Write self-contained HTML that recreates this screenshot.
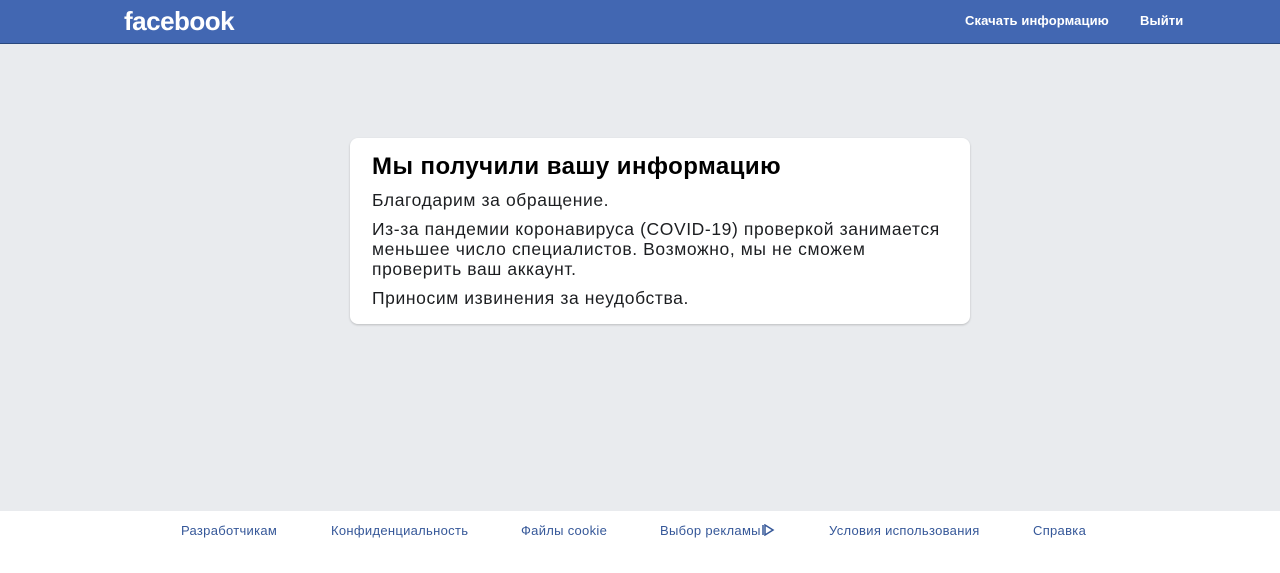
<!DOCTYPE html>
<html><head><meta charset="utf-8"><style>
body{margin:0;width:1280px;height:573px;background:#e9ebee;font-family:"Liberation Sans",sans-serif;position:relative;overflow:hidden}
.top{position:absolute;left:0;top:0;width:1280px;height:44px;background:#4267b2;border-bottom:1px solid #29487d;box-sizing:border-box}
.logo{position:absolute;left:124px;top:6px;color:#fff;font-weight:bold;font-size:26px;letter-spacing:-0.5px}
.tl{position:absolute;top:13px;color:#fff;font-weight:bold;font-size:13px;letter-spacing:0.1px}
.card{position:absolute;left:350px;top:138px;width:620px;height:186px;background:#fff;border-radius:8px;box-shadow:0 1px 2px rgba(0,0,0,.2)}
h1{position:absolute;left:22px;top:15px;margin:0;font-size:24px;font-weight:bold;color:#000;letter-spacing:0.45px}
p{position:absolute;left:22px;margin:0;font-size:17.5px;line-height:20px;color:#1c1e21;width:590px;letter-spacing:0.6px}
.foot{position:absolute;left:0;top:511px;width:1280px;height:62px;background:#fff}
.fl{position:absolute;top:12px;color:#365899;font-size:13px;letter-spacing:0.3px}
</style></head><body>
<div class="top"><div class="logo">facebook</div>
<div class="tl" style="left:965px">Скачать информацию</div>
<div class="tl" style="left:1140px">Выйти</div></div>
<div class="card">
<h1>Мы получили вашу информацию</h1>
<p style="top:52px">Благодарим за обращение.</p>
<p style="top:81px">Из-за пандемии коронавируса (COVID-19) проверкой занимается<br>меньшее число специалистов. Возможно, мы не сможем<br>проверить ваш аккаунт.</p>
<p style="top:150px">Приносим извинения за неудобства.</p>
</div>
<div class="foot">
<span class="fl" style="left:181px">Разработчикам</span>
<span class="fl" style="left:331px">Конфиденциальность</span>
<span class="fl" style="left:521px">Файлы cookie</span>
<span class="fl" style="left:660px">Выбор рекламы<svg width="14" height="12" viewBox="0 0 14 12" style="vertical-align:-1px"><path d="M2 1v10M4 1l8 5-8 5z" fill="none" stroke="#365899" stroke-width="1.5"/></svg></span>
<span class="fl" style="left:829px">Условия использования</span>
<span class="fl" style="left:1033px">Справка</span>
</div>
</body></html>
